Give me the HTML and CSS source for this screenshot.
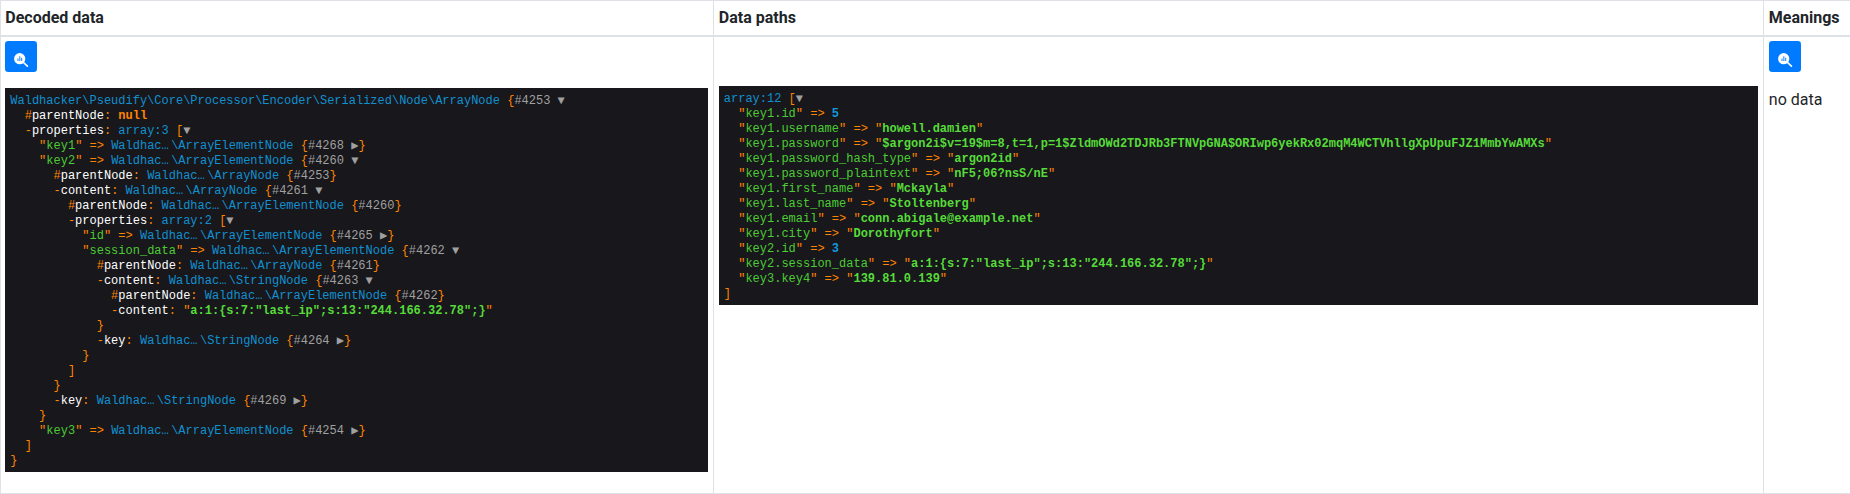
FILE: index.html
```
<!DOCTYPE html>
<html lang="en">
<head>
<meta charset="utf-8">
<title>Decoded data</title>
<link rel="stylesheet" href="styles.css">
</head>
<body>
<table class="results">
<colgroup><col class="col-decoded"><col class="col-paths"><col class="col-meanings"></colgroup>
<thead>
<tr><th>Decoded data</th><th>Data paths</th><th>Meanings</th></tr>
</thead>
<tbody>
<tr>
<td>
<button class="btn" type="button" aria-label="Inspect"><svg class="icon" viewBox="0 0 15 15"><circle cx="5.700" cy="5.700" r="5.600" fill="#fff"/><path d="M9.500 9.500 13.400 13.200" fill="none" stroke="#fff" stroke-width="1.700" stroke-linecap="round"/><path d="M3.400 5.500h1.200v2.600H3.400zM5.200 3.300h1.200v4.800H5.200zM7 4.700h1.200v3.400H7z" fill="#3d95ff"/></svg></button>
<pre class="dump"><span class="ns">Waldhacker\Pseudify\Core\Processor\Encoder\Serialized\Node\ArrayNode</span> {<span class="ref">#4253</span><span class="tg"> ▼</span>
  #<span class="prop">parentNode</span>: <span class="const">null</span>
  -<span class="prop">properties</span>: <span class="ns">array:3</span> [<span class="tg">▼</span>
    "<span class="key">key1</span>" =&gt; <span class="ell">Waldhac…</span><span class="ns">\ArrayElementNode</span> {<span class="ref">#4268</span><span class="tg"> ▶</span>}
    "<span class="key">key2</span>" =&gt; <span class="ell">Waldhac…</span><span class="ns">\ArrayElementNode</span> {<span class="ref">#4260</span><span class="tg"> ▼</span>
      #<span class="prop">parentNode</span>: <span class="ell">Waldhac…</span><span class="ns">\ArrayNode</span> {<span class="ref">#4253</span>}
      -<span class="prop">content</span>: <span class="ell">Waldhac…</span><span class="ns">\ArrayNode</span> {<span class="ref">#4261</span><span class="tg"> ▼</span>
        #<span class="prop">parentNode</span>: <span class="ell">Waldhac…</span><span class="ns">\ArrayElementNode</span> {<span class="ref">#4260</span>}
        -<span class="prop">properties</span>: <span class="ns">array:2</span> [<span class="tg">▼</span>
          "<span class="key">id</span>" =&gt; <span class="ell">Waldhac…</span><span class="ns">\ArrayElementNode</span> {<span class="ref">#4265</span><span class="tg"> ▶</span>}
          "<span class="key">session_data</span>" =&gt; <span class="ell">Waldhac…</span><span class="ns">\ArrayElementNode</span> {<span class="ref">#4262</span><span class="tg"> ▼</span>
            #<span class="prop">parentNode</span>: <span class="ell">Waldhac…</span><span class="ns">\ArrayNode</span> {<span class="ref">#4261</span>}
            -<span class="prop">content</span>: <span class="ell">Waldhac…</span><span class="ns">\StringNode</span> {<span class="ref">#4263</span><span class="tg"> ▼</span>
              #<span class="prop">parentNode</span>: <span class="ell">Waldhac…</span><span class="ns">\ArrayElementNode</span> {<span class="ref">#4262</span>}
              -<span class="prop">content</span>: "<span class="str">a:1:{s:7:"last_ip";s:13:"244.166.32.78";}</span>"
            }
            -<span class="prop">key</span>: <span class="ell">Waldhac…</span><span class="ns">\StringNode</span> {<span class="ref">#4264</span><span class="tg"> ▶</span>}
          }
        ]
      }
      -<span class="prop">key</span>: <span class="ell">Waldhac…</span><span class="ns">\StringNode</span> {<span class="ref">#4269</span><span class="tg"> ▶</span>}
    }
    "<span class="key">key3</span>" =&gt; <span class="ell">Waldhac…</span><span class="ns">\ArrayElementNode</span> {<span class="ref">#4254</span><span class="tg"> ▶</span>}
  ]
}</pre>
</td>
<td>
<div class="spacer"></div>
<pre class="dump"><span class="ns">array:12</span> [<span class="tg">▼</span>
  "<span class="key">key1.id</span>" =&gt; <span class="num">5</span>
  "<span class="key">key1.username</span>" =&gt; "<span class="str">howell.damien</span>"
  "<span class="key">key1.password</span>" =&gt; "<span class="str">$argon2i$v=19$m=8,t=1,p=1$ZldmOWd2TDJRb3FTNVpGNA$ORIwp6yekRx02mqM4WCTVhllgXpUpuFJZ1MmbYwAMXs</span>"
  "<span class="key">key1.password_hash_type</span>" =&gt; "<span class="str">argon2id</span>"
  "<span class="key">key1.password_plaintext</span>" =&gt; "<span class="str">nF5;06?nsS/nE</span>"
  "<span class="key">key1.first_name</span>" =&gt; "<span class="str">Mckayla</span>"
  "<span class="key">key1.last_name</span>" =&gt; "<span class="str">Stoltenberg</span>"
  "<span class="key">key1.email</span>" =&gt; "<span class="str">conn.abigale@example.net</span>"
  "<span class="key">key1.city</span>" =&gt; "<span class="str">Dorothyfort</span>"
  "<span class="key">key2.id</span>" =&gt; <span class="num">3</span>
  "<span class="key">key2.session_data</span>" =&gt; "<span class="str">a:1:{s:7:"last_ip";s:13:"244.166.32.78";}</span>"
  "<span class="key">key3.key4</span>" =&gt; "<span class="str">139.81.0.139</span>"
]</pre>
</td>
<td>
<button class="btn" type="button" aria-label="Inspect"><svg class="icon" viewBox="0 0 15 15"><circle cx="5.700" cy="5.700" r="5.600" fill="#fff"/><path d="M9.500 9.500 13.400 13.200" fill="none" stroke="#fff" stroke-width="1.700" stroke-linecap="round"/><path d="M3.400 5.500h1.200v2.600H3.400zM5.200 3.300h1.200v4.800H5.200zM7 4.700h1.200v3.400H7z" fill="#3d95ff"/></svg></button>
<p class="empty">no data</p>
</td>
</tr>
</tbody>
</table>
</body>
</html>
```

FILE: styles.css
```
* { box-sizing: border-box; }

html, body {
  margin: 0;
  padding: 0;
  background: #fff;
}

body {
  font-family: Roboto, "Liberation Sans", sans-serif;
  font-size: 16px;
  line-height: 24px;
  color: #212529;
  overflow: hidden;
}

.results {
  width: 1850px;
  table-layout: fixed;
  border-collapse: collapse;
  border: 1px solid #dee2e6;
}

.col-decoded { width: 713px; }
.col-paths { width: 1050px; }
.col-meanings { width: 87px; }

.results th,
.results td {
  padding: 4.8px;
  border: 1px solid #dee2e6;
  vertical-align: top;
  text-align: left;
}

.results th:first-child,
.results td:first-child {
  padding-left: 4.3px;
}

.results thead th {
  font-weight: 700;
  border-bottom: 2px solid #dee2e6;
}

.btn {
  display: block;
  width: 32px;
  height: 31px;
  padding: 0;
  border: 0;
  border-radius: 3.2px;
  background: #007bff;
}

.icon {
  display: block;
  width: 15px;
  height: 15px;
  margin: 8px 0 0 9px;
}

.spacer { height: 44.6px; }

.dump {
  margin: 16px 0;
  padding: 6px 5px 3px;
  background: #18171b;
  color: #ff8400;
  font-family: "Liberation Mono", monospace;
  font-size: 12px;
  line-height: 15px;
  white-space: pre;
  overflow: hidden;
}

.spacer + .dump { margin-top: 0; }

.ns { color: #1190d0; }
.prop { color: #fff; }
.key { color: #4ccc34; }
.str { color: #56db3a; font-weight: 700; }
.num { color: #1299da; font-weight: 700; }
.const { font-weight: 700; }
.ref { color: #a0a0a0; }
.tg { color: #a0a0a0; }

.ell {
  display: inline-block;
  width: 5em;
  vertical-align: top;
  color: #1190d0;
}

.empty { margin: 16px 0; }
```
